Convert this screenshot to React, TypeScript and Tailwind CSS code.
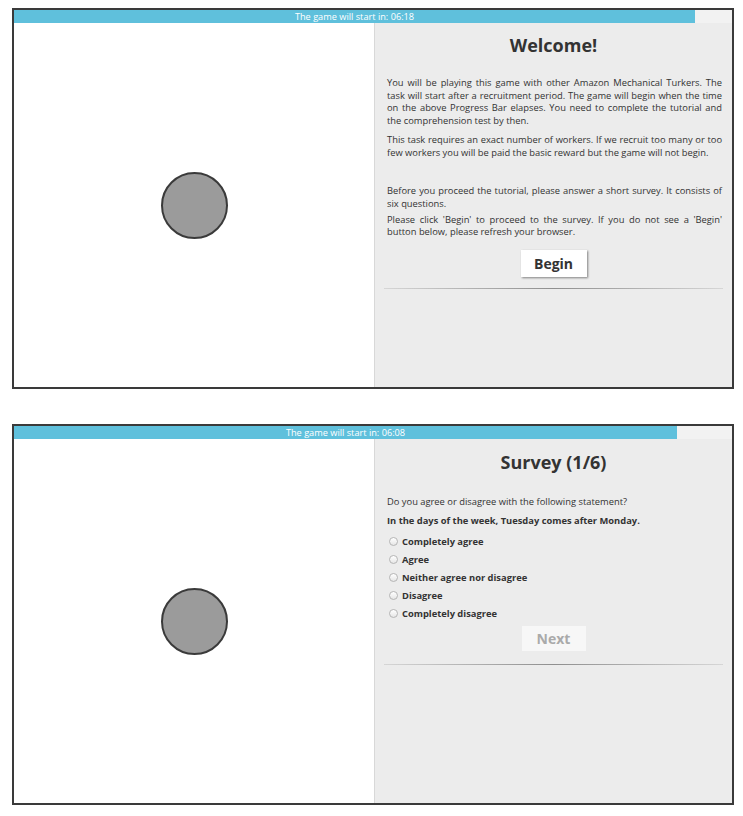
import React from "react";

const Radio = () => (
  <span className="inline-block h-[9px] w-[9px] shrink-0 rounded-full border border-[#b5b5b5] bg-gradient-to-b from-white to-[#e6e6e6]" />
);

const Divider = () => <div className="mx-[9px] h-px bg-gradient-to-r from-[#d6d6d6] via-[#8f8f8f] to-[#d6d6d6]" />;

function Panel({ timer, barWidth, children }: { timer: string; barWidth: string; children: React.ReactNode }) {
  return (
    <div className="flex h-[381px] w-[722px] flex-col border-2 border-[#3a3a3a] bg-white">
      <div className="flex h-[13px] bg-[#f2f2f2]">
        <div
          className="flex h-full items-center justify-center bg-[#5fc0dc] text-[9.2px] leading-none text-white"
          style={{ width: barWidth }}
        >
          The game will start in: {timer}
        </div>
      </div>
      <div className="flex flex-1">
        <div className="flex w-[360px] items-center justify-center">
          <div className="h-[67px] w-[67px] rounded-full border-2 border-[#3a3a3a] bg-[#9b9b9b]" />
        </div>
        <div className="flex-1 border-l border-[#d8d8d8] bg-[#ececec] pt-[9px] text-[#333]">{children}</div>
      </div>
    </div>
  );
}

export default function App() {
  return (
    <div
      className="min-h-[816px] bg-white pl-[12px] pt-[8px]"
      style={{ fontFamily: "'Open Sans', 'Noto Sans', sans-serif" }}
    >
      <Panel timer="06:18" barWidth="681px">
        <h1 className="pt-[1px] text-center text-[18px] font-bold leading-[24px]">Welcome!</h1>
        <div className="pl-[12px] pr-[10px] pt-[20px] text-justify text-[9.35px] leading-[12.5px]">
          <p>
            You will be playing this game with other Amazon Mechanical Turkers. The task will start after a
            recruitment period. The game will begin when the time on the above Progress Bar elapses. You need to
            complete the tutorial and the comprehension test by then.
          </p>
          <p className="mt-[7px]">
            This task requires an exact number of workers. If we recruit too many or too few workers you will be
            paid the basic reward but the game will not begin.
          </p>
          <p className="mt-[26px]">
            Before you proceed the tutorial, please answer a short survey. It consists of six questions.
          </p>
          <p className="mt-[3.5px]">
            Please click 'Begin' to proceed to the survey. If you do not see a 'Begin' button below, please refresh
            your browser.
          </p>
        </div>
        <div className="flex justify-center pt-[11px]">
          <button className="h-[27px] w-[66px] bg-white text-[14px] font-bold text-[#333] shadow-[1px_1px_2px_rgba(0,0,0,0.45)]">
            Begin
          </button>
        </div>
        <div className="mt-[11px]">
          <Divider />
        </div>
      </Panel>

      <div className="h-[35px]" />

      <Panel timer="06:08" barWidth="663px">
        <h1 className="pt-[2px] text-center text-[18px] font-bold leading-[24px]">Survey (1/6)</h1>
        <div className="pl-[12px] pr-[10px] pt-[22px] text-[9.35px] leading-[12.5px]">
          <p>Do you agree or disagree with the following statement?</p>
          <p className="mt-[6px] font-bold">In the days of the week, Tuesday comes after Monday.</p>
          <div className="mt-[8.5px] flex flex-col gap-[5.5px]">
            {["Completely agree", "Agree", "Neither agree nor disagree", "Disagree", "Completely disagree"].map((o) => (
              <label key={o} className="flex items-center gap-[4px] pl-[2px] font-bold">
                <Radio />
                <span>{o}</span>
              </label>
            ))}
          </div>
        </div>
        <div className="flex justify-center pt-[6px]">
          <button className="h-[25px] w-[64px] bg-[#f7f7f7] text-[14px] font-bold text-[#aaa]">Next</button>
        </div>
        <div className="mt-[13px]">
          <Divider />
        </div>
      </Panel>
    </div>
  );
}
